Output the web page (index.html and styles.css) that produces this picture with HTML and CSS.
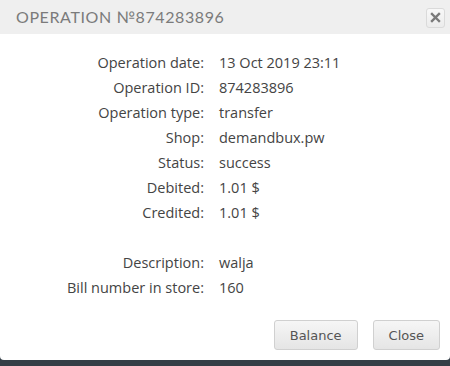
FILE: index.html
```html
<!DOCTYPE html>
<html lang="en">
<head>
    <meta charset="UTF-8">
    <title>Operation</title>
    <link rel="stylesheet" href="styles.css">
</head>
<body>
<div class="dialog">
    <div class="dialog-header">
        <span class="dialog-title">Operation №874283896</span>
        <button class="header-close" title="close">
            <svg width="11" height="11" viewBox="0 0 11 11">
                <path d="M2 2 L9 9 M9 2 L2 9" stroke="#7a7a7a" stroke-width="2.4" stroke-linecap="square"/>
            </svg>
        </button>
    </div>
    <div class="dialog-body">
        <div class="info-grid">
            <div class="label">Operation date:</div><div class="value">13 Oct 2019 23:11</div>
            <div class="label">Operation ID:</div><div class="value">874283896</div>
            <div class="label">Operation type:</div><div class="value">transfer</div>
            <div class="label">Shop:</div><div class="value">demandbux.pw</div>
            <div class="label">Status:</div><div class="value">success</div>
            <div class="label">Debited:</div><div class="value">1.01 $</div>
            <div class="label">Credited:</div><div class="value">1.01 $</div>
            <div class="label"></div><div class="value"></div>
            <div class="label">Description:</div><div class="value">walja</div>
            <div class="label">Bill number in store:</div><div class="value">160</div>
        </div>
    </div>
    <div class="dialog-buttons">
        <button class="btn">Balance</button>
        <button class="btn">Close</button>
    </div>
</div>
</body>
</html>
```

FILE: styles.css
```css
body {
    margin: 0;
    background-color: #343e46;
    font-family: 'Open Sans', sans-serif;
    height: 366px;
    overflow: hidden;
}

.dialog {
    background-color: white;
    height: 360px;
    border-radius: 0 0 4px 4px;
    display: flex;
    flex-direction: column;
}

.dialog-header {
    background-color: #efefef;
    height: 34px;
    display: flex;
    align-items: center;
    justify-content: space-between;
    padding: 0 5px 0 16px;
}

.dialog-title {
    font-family: 'Lato', sans-serif;
    text-transform: uppercase;
    font-size: 16px;
    letter-spacing: 0.6px;
    color: #7b7b7b;
    margin-top: -1px;
}

.header-close {
    width: 19px;
    height: 20px;
    padding: 0;
    margin-top: 1px;
    border: 1px solid #dadada;
    border-radius: 3px;
    background: linear-gradient(#f8f8f8, #ececec);
    display: flex;
    align-items: center;
    justify-content: center;
}

.dialog-body {
    padding-top: 16px;
}

.info-grid {
    display: grid;
    grid-template-columns: 204px auto;
    column-gap: 15px;
    grid-auto-rows: 25px;
    align-items: center;
    font-size: 14.5px;
    color: #444;
}

.label {
    text-align: right;
}

.dialog-buttons {
    display: flex;
    justify-content: flex-end;
    gap: 15px;
    padding: 20px 10px 0 0;
}

.btn {
    height: 30px;
    padding: 0 15px;
    border: 1px solid #d0d0d0;
    border-radius: 3px;
    background: linear-gradient(#f6f6f6, #e5e5e5);
    font-family: 'DejaVu Sans', Verdana, sans-serif;
    font-size: 13px;
    color: #555;
}
```
